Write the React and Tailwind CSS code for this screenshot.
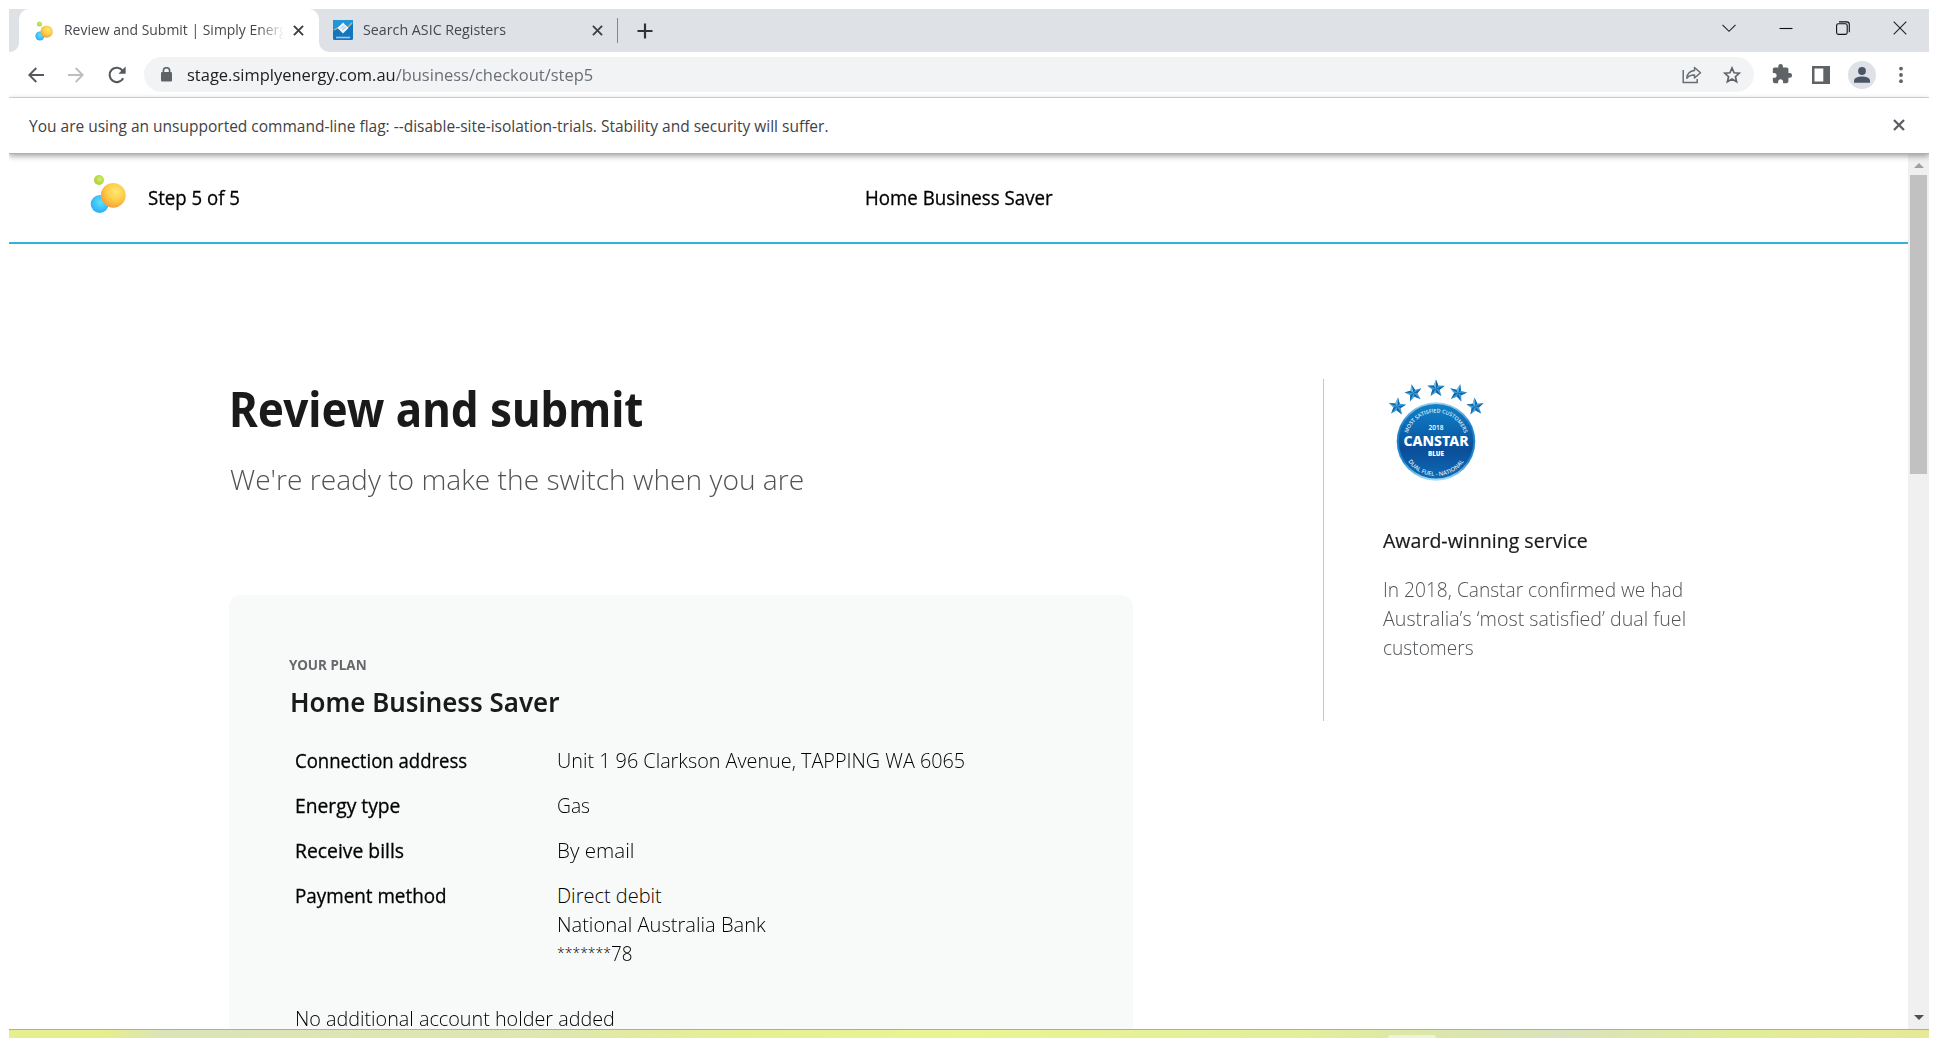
const details = [
  { label: "Connection address", labelFit: "scale-x-[0.927]", values: [["Unit 1 96 Clarkson Avenue, TAPPING WA 6065", "scale-x-[0.99]"]] },
  { label: "Energy type", labelFit: "scale-x-[0.963]", values: [["Gas", "scale-x-[0.96]"]] },
  { label: "Receive bills", labelFit: "scale-x-[0.967]", values: [["By email", "scale-x-[1.03]"]] },
  { label: "Payment method", labelFit: "scale-x-[0.942]", values: [["Direct debit", "scale-x-100"], ["National Australia Bank", "scale-x-[1.005]"]] },
];

function Fit({ className = "", children }) {
  return <span className={`inline-block origin-left whitespace-nowrap ${className}`}>{children}</span>;
}

function Bubbles({ className }) {
  return (
    <svg viewBox="90 174 36 40" className={className}>
      <defs>
        <radialGradient id="orange" cx="60%" cy="35%" r="70%">
          <stop offset="0" stopColor="#ffe873" />
          <stop offset="0.55" stopColor="#fecb46" />
          <stop offset="1" stopColor="#f29a3c" />
        </radialGradient>
        <radialGradient id="blue" cx="55%" cy="40%" r="65%">
          <stop offset="0" stopColor="#5be3ff" />
          <stop offset="1" stopColor="#2aa9f5" />
        </radialGradient>
        <radialGradient id="green" cx="60%" cy="40%" r="65%">
          <stop offset="0" stopColor="#d3ee62" />
          <stop offset="1" stopColor="#a3cf3a" />
        </radialGradient>
      </defs>
      <circle cx="99" cy="180" r="5" fill="url(#green)" />
      <circle cx="99.7" cy="204" r="9" fill="url(#blue)" />
      <circle cx="113.3" cy="195.3" r="12.4" fill="url(#orange)" />
    </svg>
  );
}

function Cross({ size, color, width }) {
  return (
    <svg width={size} height={size} viewBox="0 0 12 12" stroke={color} strokeWidth={width} fill="none">
      <path d="M1 1 11 11M11 1 1 11" />
    </svg>
  );
}

function TabStrip() {
  return (
    <div className="flex h-[43px] bg-white text-[15px] text-[#45484d]">
      <div className="w-[10px] rounded-br-[9px] bg-[#dee1e6]" />
      <div className="w-[300px] bg-[#dee1e6]">
        <div className="flex h-full items-center rounded-t-[10px] bg-white pl-4">
          <Bubbles className="h-[20px] w-[18px] shrink-0" />
          <div className="mb-[3px] ml-[11px] h-[22px] w-[220px] overflow-hidden leading-[22px] [mask-image:linear-gradient(to_right,black_88%,transparent)]">
            <Fit className="scale-x-[0.93]">Review and Submit | Simply Energy</Fit>
          </div>
          <div className="ml-[9px]"><Cross size={11} color="#3c4043" width={2.1} /></div>
        </div>
      </div>
      <div className="flex flex-1 items-center rounded-bl-[10px] bg-[#dee1e6] pl-[14px]">
        <svg className="mb-[2px]" width="20" height="20" viewBox="0 0 20 20">
          <rect width="20" height="20" rx="1.5" fill="#1476bd" />
          <path d="M0 11 7 8 12 11 20 3V0H0Z" fill="#2294d8" />
          <path d="M1 10 8 6 13 9 19 3" stroke="#b9b79b" strokeWidth="1.2" fill="none" />
          <path d="M10 2.500 15.500 8 10 13.500 4.500 8Z" fill="#e9f4fb" />
          <path d="M8 8.500 11 5.500M9.500 10 12.500 7" stroke="#7db9e0" strokeWidth="1" />
          <path d="M3 17.500H17" stroke="#9ccbe9" strokeWidth="1.6" />
        </svg>
        <div className="mb-[3px] ml-[10px] w-[229px]"><Fit className="scale-x-[0.95]">Search ASIC Registers</Fit></div>
        <Cross size={11} color="#3c4043" width={2} />
        <div className="ml-[14px] h-[25px] w-px bg-[#80868b]" />
        <svg className="ml-[19px]" width="16" height="16" viewBox="0 0 16 16" stroke="#303438" strokeWidth="2.2">
          <path d="M8 .5V15.5M.5 8H15.5" />
        </svg>
        <div className="mr-[22px] mb-[6px] ml-auto flex items-center gap-[43px]">
          <svg width="14" height="14" viewBox="0 0 14 14" stroke="#222" strokeWidth="1.1" fill="none"><path d="M.5 3.8 7 10.3 13.5 3.8" /></svg>
          <svg width="14" height="14" viewBox="0 0 14 14" stroke="#111" strokeWidth="1.1"><path d="M.5 7.5H13.5" /></svg>
          <svg width="14" height="14" viewBox="0 0 14 14" stroke="#111" strokeWidth="1.1" fill="none">
            <rect x=".6" y="2.8" width="10.6" height="10.6" rx="1.8" />
            <path d="M3 .9H10.6Q13.3 .9 13.3 3.6V11.2" />
          </svg>
          <svg width="14" height="14" viewBox="0 0 14 14" stroke="#222" strokeWidth="1.1"><path d="M.7 .7 13.3 13.3M13.3 .7 .7 13.3" /></svg>
        </div>
      </div>
    </div>
  );
}

function Toolbar() {
  return (
    <div className="flex h-[46px] items-center border-b border-[#dadce0] bg-white pl-[19px]">
      <svg width="16" height="16" viewBox="0 0 16 16" stroke="#55595e" strokeWidth="1.9" fill="none"><path d="M16 8H1.5M8.3 1 1.3 8 8.3 15" /></svg>
      <svg className="ml-6" width="16" height="16" viewBox="0 0 16 16" stroke="#bcbfc2" strokeWidth="1.9" fill="none"><path d="M0 8H14.5M7.7 1 14.7 8 7.7 15" /></svg>
      <svg className="ml-6" width="18" height="18" viewBox="0 0 18 18">
        <path d="M15.2 12.2A7.2 7.2 0 1 1 14.6 4.6" fill="none" stroke="#55595e" strokeWidth="2.1" />
        <path d="M17.6 .6V7.8H10.4Z" fill="#55595e" />
      </svg>
      <div className="ml-[18px] flex h-[35px] w-[1610px] items-center rounded-full bg-[#f1f3f4] pl-[17px] text-[17px] leading-[24px]">
        <svg width="11" height="15" viewBox="0 0 11 15">
          <rect y="5" width="11" height="9.5" rx="1.3" fill="#5f6368" />
          <path d="M2.4 6V3.8A3.1 3.1 0 0 1 8.6 3.8V6" fill="none" stroke="#5f6368" strokeWidth="1.6" />
        </svg>
        <Fit className="ml-[15px] scale-x-[0.969]"><span className="text-[#202124]">stage.simplyenergy.com.au</span><span className="text-[#6b6f74]">/business/checkout/step5</span></Fit>
        <svg className="ml-auto" width="20" height="18" viewBox="0 0 20 18" fill="none" stroke="#6a6e73" strokeWidth="1.5">
          <path d="M1.2 4V16.4H15.2V13" />
          <path d="M12.5 1.5 18.5 6.7 12.5 12V9C8.8 8.8 6.5 9.9 4.8 12.2 5.2 8 7.7 5 12.5 4.6Z" strokeLinejoin="round" />
        </svg>
        <svg className="mr-[13px] ml-[21px]" width="18" height="18" viewBox="0 0 18 18" fill="none" stroke="#5f6368" strokeWidth="1.7">
          <path d="M9 2 11.1 6.8 16.3 7.2 12.4 10.7 13.6 15.8 9 13.1 4.4 15.8 5.6 10.7 1.7 7.2 6.9 6.8Z" />
        </svg>
      </div>
      <svg className="mb-[2px] ml-[17px]" width="22" height="22" viewBox="0 0 24 24" fill="#5f6368">
        <path d="M20.5 11H19V7c0-1.1-.9-2-2-2h-4V3.500a2.500 2.500 0 0 0-5 0V5H4c-1.100 0-1.990.9-1.990 2v3.800H3.500c1.490 0 2.700 1.210 2.700 2.700s-1.210 2.700-2.700 2.700H2V20c0 1.100.9 2 2 2h3.800v-1.500c0-1.490 1.210-2.700 2.700-2.700s2.700 1.210 2.700 2.700V22H17c1.100 0 2-.9 2-2v-4h1.500a2.500 2.500 0 0 0 0-5z" />
      </svg>
      <svg className="ml-[19px]" width="18" height="18" viewBox="0 0 18 18"><path fillRule="evenodd" fill="#5f6368" d="M0 0H18V18H0ZM2.500 2.500V15.500H11.300V2.500Z" /></svg>
      <div className="ml-[18px] flex h-7 w-7 items-center justify-center rounded-full bg-[#dee1e6]">
        <svg width="16" height="16" viewBox="0 0 16 16" fill="#4a5568"><circle cx="8" cy="4" r="3.900" /><path d="M0 15.800V13.500C0 10.800 4.500 9.400 8 9.400S16 10.800 16 13.500V15.800Z" /></svg>
      </div>
      <svg className="ml-[23px]" width="4" height="18" viewBox="0 0 4 18" fill="#5f6368"><circle cx="2" cy="2.600" r="1.900" /><circle cx="2" cy="9" r="1.900" /><circle cx="2" cy="15.200" r="1.900" /></svg>
    </div>
  );
}

function BadgeStar({ x, y, turn }) {
  const outer = "0,-9 2.3,-2.900 8.700,-2.700 3.700,1.300 5.400,7.500 0,3.900 -5.400,7.500 -3.700,1.300 -8.700,-2.700 -2.300,-2.900";
  return (
    <g transform={`translate(${x} ${y}) rotate(${turn})`}>
      <polygon points={outer} fill="#3c9fda" />
      <path d="M0 0 0-9 2.300-2.900ZM0 0 8.700-2.700 3.700 1.300ZM0 0 5.400 7.500 0 3.900ZM0 0-5.400 7.500-3.700 1.300ZM0 0-8.700-2.700-2.300-2.900Z" fill="#1366a8" />
      <path d="M0 0 0-9-2.300-2.900Z" fill="#62bdec" />
    </g>
  );
}

function AwardBadge() {
  return (
    <svg width="117" height="111" viewBox="3 9 117 111" className="font-['Open_Sans',sans-serif]">
      <defs>
        <linearGradient id="disc" x1="0" y1="0" x2="0" y2="1">
          <stop offset="0" stopColor="#1181c6" />
          <stop offset="0.35" stopColor="#0b66b0" />
          <stop offset="0.6" stopColor="#0b4d98" />
          <stop offset="1" stopColor="#0e6ab6" />
        </linearGradient>
        <linearGradient id="rim" x1="0" y1="0" x2="0" y2="1">
          <stop offset="0" stopColor="#a5d9f2" />
          <stop offset="0.3" stopColor="#1e7fc4" />
          <stop offset="0.75" stopColor="#2186cc" />
          <stop offset="1" stopColor="#a9e0f7" />
        </linearGradient>
        <path id="upper" d="M28.600 83A29.500 29.500 0 1 1 83.400 83" />
        <path id="lower" d="M21.500 71.500A34.500 34.500 0 0 0 90.500 71.500" />
      </defs>
      <BadgeStar x={17.200} y={36.500} turn={5} />
      <BadgeStar x={33.500} y={23} turn={-14} />
      <BadgeStar x={56} y={18.500} turn={0} />
      <BadgeStar x={78} y={23} turn={14} />
      <BadgeStar x={95.200} y={36.500} turn={-5} />
      <circle cx="56" cy="71.500" r="39.300" fill="url(#rim)" />
      <circle cx="56" cy="71.300" r="37.300" fill="url(#disc)" />
      <g fill="#fff" textAnchor="middle">
        <text fontSize="5.3" fontWeight="600" fill="#e0f1fb"><textPath href="#upper" startOffset="50%">MOST SATISFIED CUSTOMERS</textPath></text>
        <text fontSize="5.8" fontWeight="600" fill="#d6ecf9"><textPath href="#lower" startOffset="50%">DUAL FUEL - NATIONAL</textPath></text>
        <text x="56" y="60" fontSize="6.500" fontWeight="600">2018</text>
        <text x="56" y="76.300" fontSize="14" fontWeight="800" textLength="65" lengthAdjust="spacingAndGlyphs" className="font-['Noto_Sans',sans-serif]">CANSTAR</text>
        <text x="56" y="86" fontSize="6.300" fontWeight="800">BLUE</text>
      </g>
    </svg>
  );
}

function PlanCard() {
  return (
    <section className="mt-[95px] h-[434px] rounded-t-[12px] bg-[#f8faf9] pt-[59px] pl-[61px] text-[20px] leading-[29px] text-black">
      <p className="pt-px font-['Noto_Sans',sans-serif] text-[15px] leading-[19px] font-bold text-[#66696b]"><Fit className="-ml-px scale-x-[0.9]">YOUR PLAN</Fit></p>
      <h2 className="mt-[10px] mb-[18px] font-['Noto_Sans',sans-serif] text-[27.5px] leading-9 font-semibold text-[#1a1a1a]"><Fit className="scale-x-[0.94]">Home Business Saver</Fit></h2>
      <dl className="pl-[5px]">
        {details.map((row, i) => (
          <div key={row.label} className="flex py-2">
            <dt className="w-[262px] [-webkit-text-stroke:0.3px_#000]"><Fit className={row.labelFit}>{row.label}</Fit></dt>
            <dd className="flex flex-col items-start font-light">
              {row.values.map(([text, fit]) => <Fit key={text} className={fit}>{text}</Fit>)}
              {i === 3 && <span className="flex"><span className="w-[54px] pt-px text-[14px] leading-[26px]">*******</span><Fit className="scale-x-[0.94]">78</Fit></span>}
            </dd>
          </div>
        ))}
      </dl>
      <p className="mt-7 pl-[5px] font-light"><Fit className="scale-x-[0.989]">No additional account holder added</Fit></p>
    </section>
  );
}

function ScrollBar() {
  return (
    <div className="flex h-full w-[21px] flex-col items-center bg-[#f0f0f0]">
      <svg className="mt-[9px]" width="10" height="5" viewBox="0 0 10 5"><path d="M5 0 10 5H0Z" fill="#a0a0a0" /></svg>
      <div className="mt-[7px] h-[299px] w-[17px] bg-[#c1c1c1]" />
      <svg className="mt-auto mb-[9px]" width="10" height="5" viewBox="0 0 10 5"><path d="M0 0H10L5 5Z" fill="#505050" /></svg>
    </div>
  );
}

export default function App() {
  return (
    <div className="h-[1038px] w-[1938px] overflow-hidden bg-white px-[9px] pt-[9px] font-['Open_Sans','Noto_Sans',sans-serif]">
      <div className="flex h-[1020px] flex-col overflow-hidden">
        <TabStrip />
        <Toolbar />
        <div className="relative z-10 flex h-[56px] shrink-0 items-center justify-between border-b border-[#b0b0b0] bg-white pr-6 pl-5 text-[15.500px] text-[#3f4246] shadow-[0_2px_6px_rgba(0,0,0,0.38)]">
          <Fit className="pt-[2px]">You are using an unsupported command-line flag: --disable-site-isolation-trials. Stability and security will suffer.</Fit>
          <div className="pb-[2px]"><Cross size={12} color="#5a5e63" width={2.300} /></div>
        </div>
        <div className="flex min-h-0 flex-1">
          <div className="flex-1 overflow-hidden">
            <header className="flex h-[90px] items-center border-b-2 border-[#35b1e1] pl-[81px] text-[20px] text-black [-webkit-text-stroke:0.3px_#000]">
              <Bubbles className="mb-[9px] h-[40px] w-[36px]" />
              <div className="ml-[22px] w-[717px]"><Fit className="scale-x-[0.93]">Step 5 of 5</Fit></div>
              <Fit className="scale-x-[0.935]">Home Business Saver</Fit>
            </header>
            <main className="flex pl-[220px]">
              <div className="w-[904px] pt-[134px]">
                <h1 className="font-['Noto_Sans',sans-serif] text-[49px] leading-[60px] font-bold text-[#1a1a1a]"><Fit className="scale-x-[0.897]">Review and submit</Fit></h1>
                <p className="mt-5 text-[28px] leading-[42px] font-light text-[#505355]"><Fit className="ml-px scale-x-[1.006]">We're ready to make the switch when you are</Fit></p>
                <PlanCard />
              </div>
              <aside className="mt-[135px] ml-[190px] h-[342px] border-l border-[#c6c6c6] pl-[59px] text-[20px]">
                <AwardBadge />
                <h3 className="mt-[36px] leading-[30px] text-[#1a1a1a] [-webkit-text-stroke:0.2px_#1a1a1a]"><Fit className="scale-x-[0.978]">Award-winning service</Fit></h3>
                <p className="mt-[19px] flex flex-col items-start leading-[29px] font-light text-[#505355]">
                  <Fit className="scale-x-[0.957]">In 2018, Canstar confirmed we had</Fit>
                  <Fit className="scale-x-[0.984]">Australia’s ‘most satisfied’ dual fuel</Fit>
                  <Fit className="scale-x-[0.955]">customers</Fit>
                </p>
              </aside>
            </main>
          </div>
          <ScrollBar />
        </div>
      </div>
      <div className="h-[9px] border-t border-[#adb28c] bg-[linear-gradient(90deg,#e6ee8d_0%,#e6ee8d_5%,#dbe4b8_8%,#dfe6ae_28%,#e6f092_38%,#e9f492_50%,#e3ee9b_68%,#dce7a8_73%,#dae2bc_81%,#e2ed98_90%,#e8e896_100%)] pl-[1379px]">
        <div className="mt-[5px] h-[3px] w-[48px] rounded-t-[3px] bg-[#edf4d3]" />
      </div>
    </div>
  );
}
